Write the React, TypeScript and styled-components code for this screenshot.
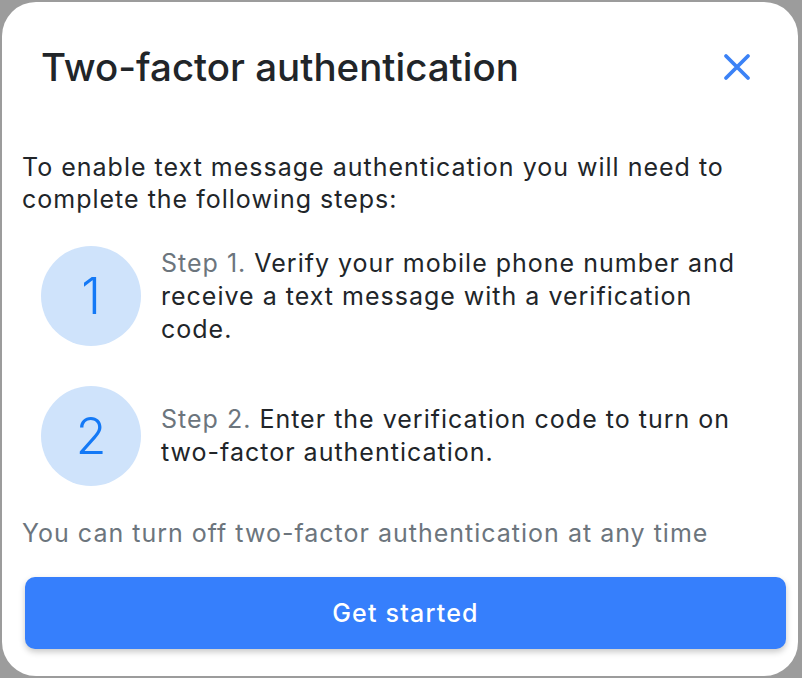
import styled, { createGlobalStyle } from "styled-components";

const GlobalStyle = createGlobalStyle`
  html, body {
    margin: 0;
    padding: 0;
    background: #9c9c9c;
  }
  body {
    font-family: Inter, "Noto Sans", "Liberation Sans", sans-serif;
    -webkit-font-smoothing: antialiased;
  }
`;

const Backdrop = styled.div`
  width: 802px;
  height: 678px;
  padding: 2px 4px 2px 2px;
  box-sizing: border-box;
`;

const Modal = styled.div`
  height: 100%;
  background: #ffffff;
  border-radius: 34px;
  display: flex;
  flex-direction: column;
  overflow: hidden;
`;

const Header = styled.div`
  height: 130px;
  display: flex;
  align-items: center;
  justify-content: space-between;
  padding: 0 46px 0 39px;
  flex-shrink: 0;
`;

const Title = styled.h1`
  margin: 0;
  font-size: 38.5px;
  font-weight: 500;
  color: #212529;
`;

const CloseButton = styled.button`
  border: none;
  background: none;
  padding: 0;
  width: 30px;
  height: 30px;
  display: flex;
  align-items: center;
  justify-content: center;
  cursor: pointer;
`;

const Body = styled.div`
  padding: 19px 20px 0;
  display: flex;
  flex-direction: column;
`;

const Text = styled.p<{ $muted?: boolean }>`
  margin: 0;
  font-size: 25px;
  line-height: 32px;
  letter-spacing: 1px;
  color: ${(p) => (p.$muted ? "#6c757d" : "#212529")};
`;

const Steps = styled.div`
  display: flex;
  flex-direction: column;
  gap: 40px;
  margin: 31px 0 31px 19px;
`;

const Step = styled.div`
  display: flex;
  align-items: center;
  gap: 20px;
`;

const Circle = styled.div`
  width: 100px;
  height: 100px;
  flex-shrink: 0;
  border-radius: 50%;
  background: #cfe3fb;
  color: #1479f6;
  font-size: 50px;
  font-weight: 300;
  display: flex;
  align-items: center;
  justify-content: center;
`;

const StepText = styled.p`
  margin: 0;
  max-width: 588px;
  font-size: 25px;
  line-height: 33px;
  letter-spacing: 1px;
  color: #212529;
`;

const StepLabel = styled.span`
  color: #6c757d;
`;

const PrimaryButton = styled.button`
  margin: 28px 12px 0 23px;
  height: 72px;
  border: none;
  border-radius: 10px;
  background: #367ffc;
  color: #ffffff;
  font-family: inherit;
  font-size: 25px;
  font-weight: 500;
  letter-spacing: 1.2px;
  box-shadow: 0 3px 6px rgba(0, 0, 0, 0.22);
  cursor: pointer;
`;

export default function App() {
  return (
    <>
      <GlobalStyle />
      <Backdrop>
        <Modal>
          <Header>
            <Title>Two-factor authentication</Title>
            <CloseButton aria-label="Close">
              <svg width="28" height="28" viewBox="0 0 28 28" fill="none">
                <path
                  d="M3 3L25 25M25 3L3 25"
                  stroke="#3b82f6"
                  strokeWidth="3.8"
                  strokeLinecap="round"
                />
              </svg>
            </CloseButton>
          </Header>
          <Body>
            <Text>
              To enable text message authentication you will need to complete
              the following steps:
            </Text>
            <Steps>
              <Step>
                <Circle>1</Circle>
                <StepText>
                  <StepLabel>Step 1.</StepLabel> Verify your mobile phone
                  number and receive a text message with a verification code.
                </StepText>
              </Step>
              <Step>
                <Circle>2</Circle>
                <StepText>
                  <StepLabel>Step 2.</StepLabel> Enter the verification code to
                  turn on two-factor authentication.
                </StepText>
              </Step>
            </Steps>
            <Text $muted>You can turn off two-factor authentication at any time</Text>
          </Body>
          <PrimaryButton>Get started</PrimaryButton>
        </Modal>
      </Backdrop>
    </>
  );
}
